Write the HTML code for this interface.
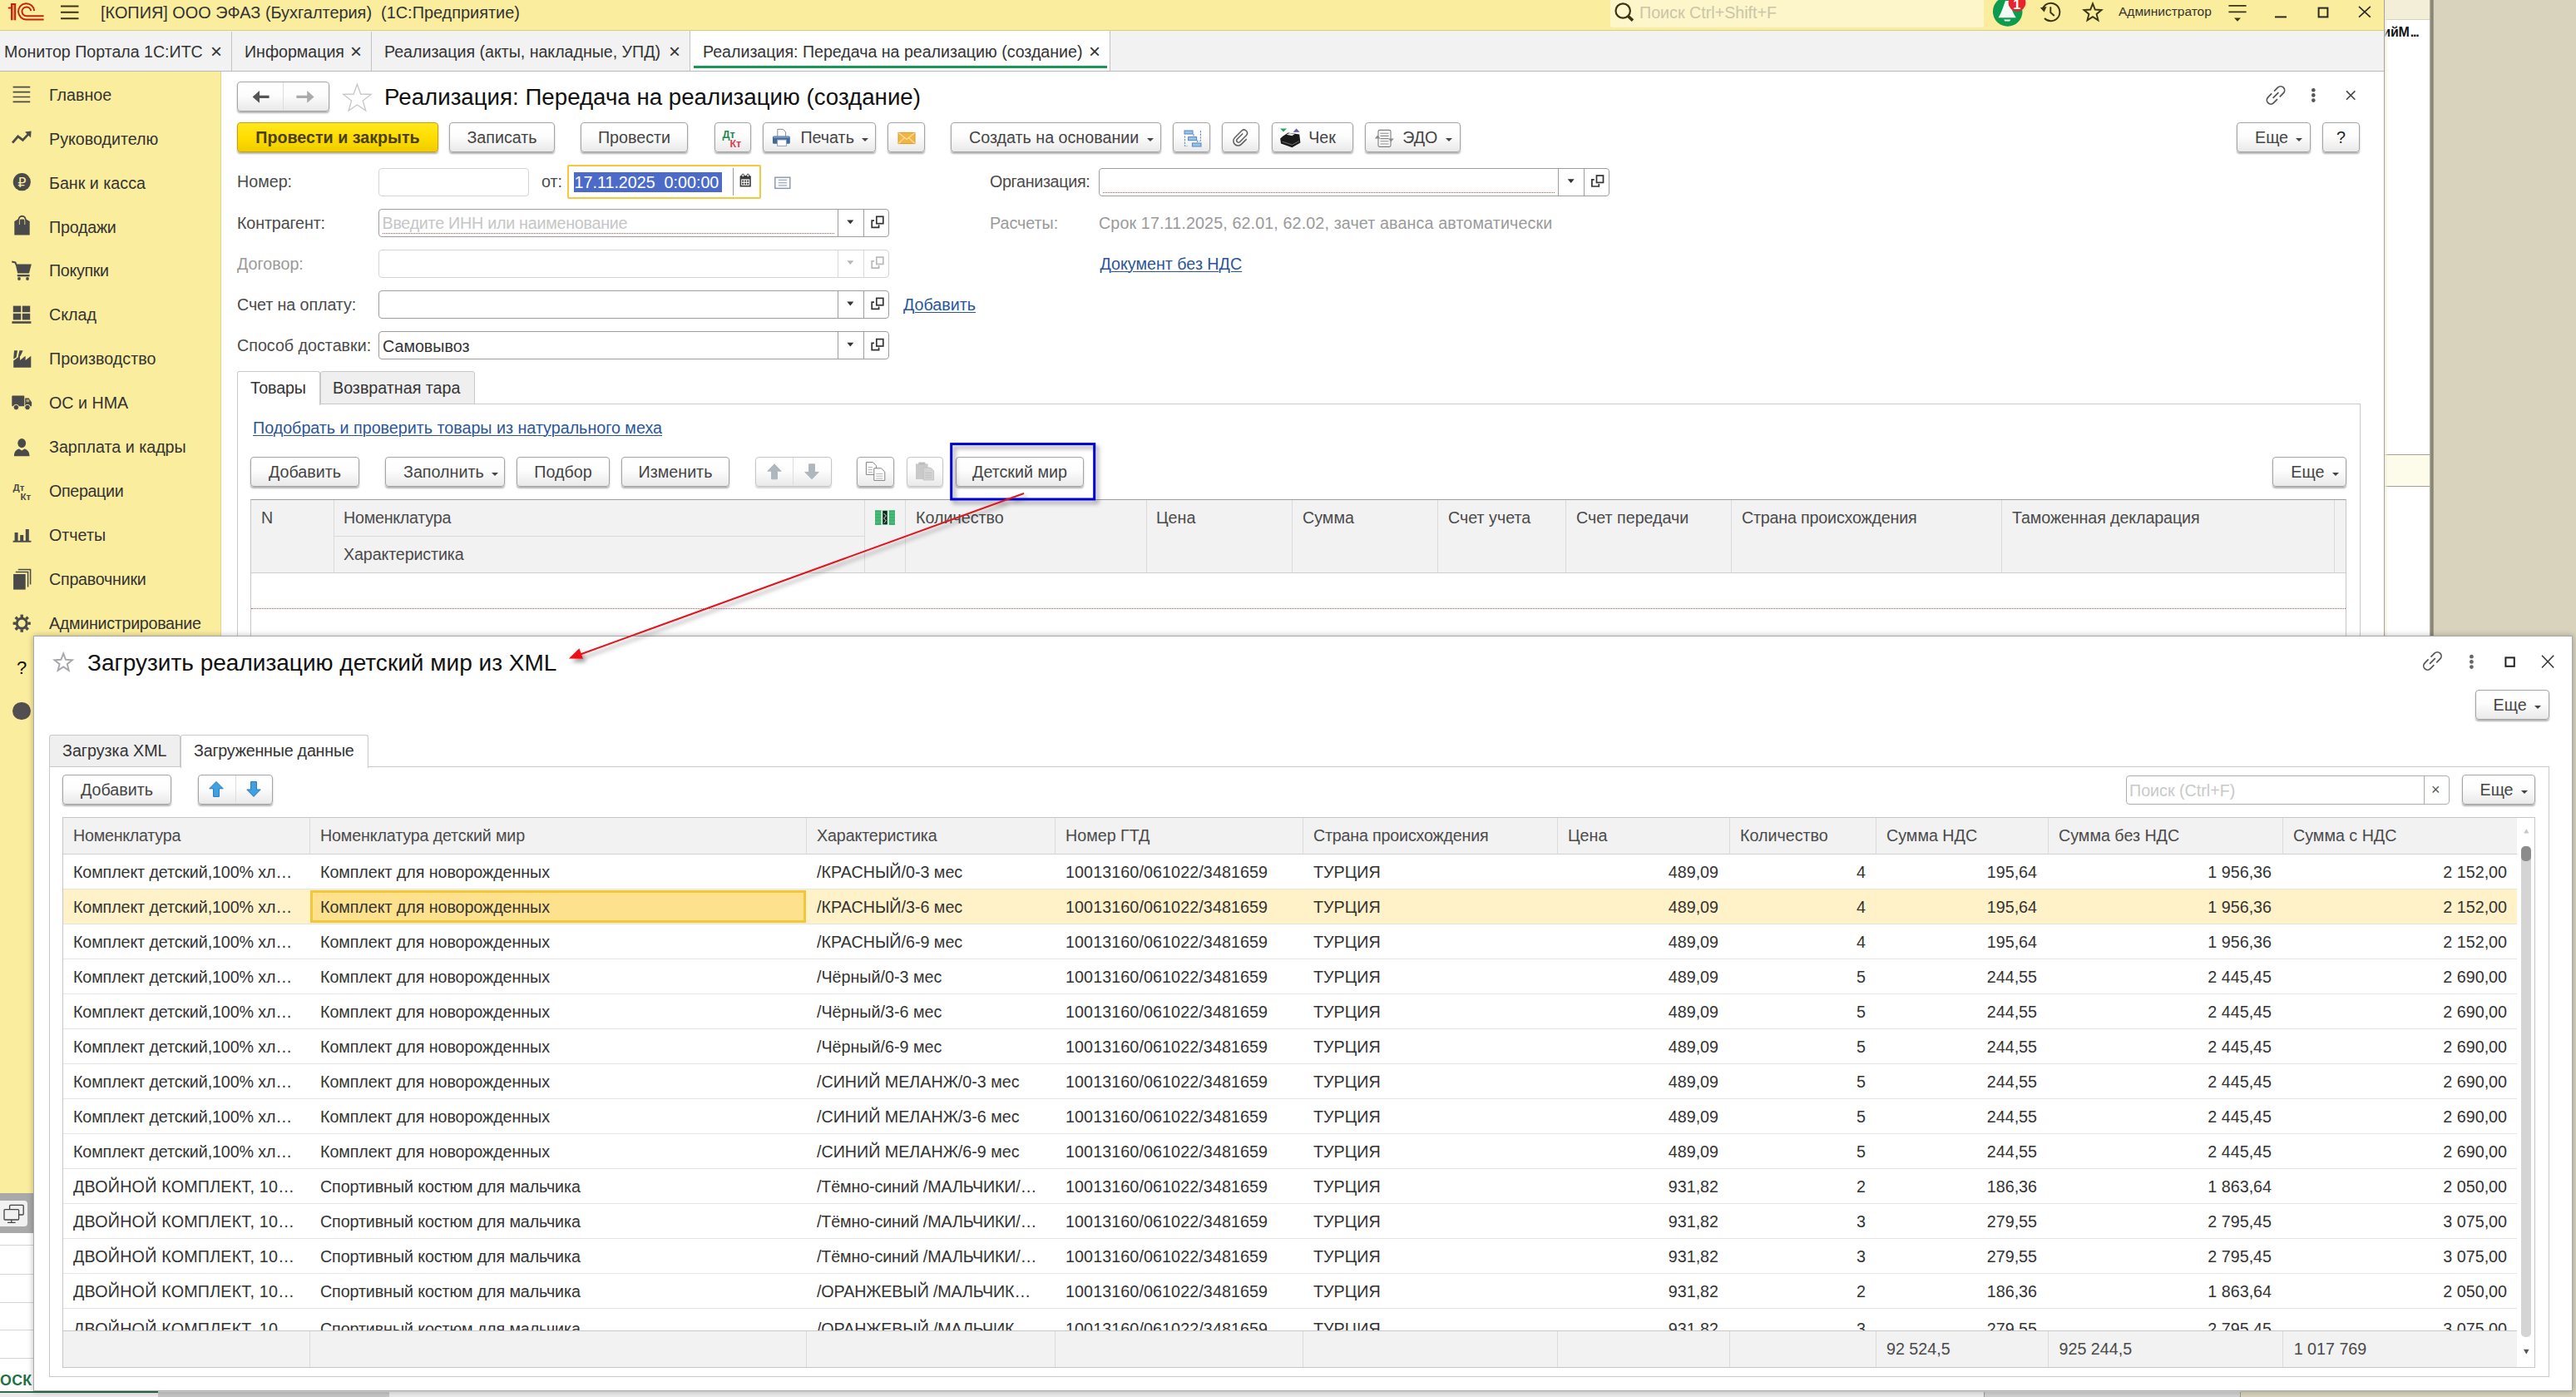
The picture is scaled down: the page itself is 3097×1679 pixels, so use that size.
<!DOCTYPE html><html lang="ru"><head><meta charset="utf-8"><title>1C</title><style>
*{box-sizing:border-box;margin:0;padding:0}
html,body{width:3097px;height:1679px;overflow:hidden}
body{position:relative;background:#D9D3BD;font-family:"Liberation Sans",Arial,sans-serif;font-size:19.7px;color:#3C3C3C;line-height:1}
.a{position:absolute}
.t{position:absolute;white-space:pre;line-height:24px;height:24px}
.btn{position:absolute;border:1px solid #A4A4A4;border-radius:4px;background:linear-gradient(#FFFFFF 0%,#FDFDFD 45%,#E9E9E9 100%);box-shadow:0 2px 2px rgba(0,0,0,.3);display:flex;align-items:center;justify-content:center;white-space:pre;color:#444;height:35px;padding-top:2px}
.btn.y{background:linear-gradient(#FFE820 0%,#FFDD00 50%,#F2CC00 100%);border-color:#C7A300;font-weight:bold;color:#4A3F10}
.car{display:inline-block;width:0;height:0;border-left:4.6px solid transparent;border-right:4.6px solid transparent;border-top:4.4px solid #444;margin-left:9.4px;position:relative;top:2px}
.btn.c{justify-content:flex-start;padding-left:21px}
.inp{position:absolute;border:1px solid #9E9E9E;border-radius:4px;background:#fff;height:34px}
.inp.dis{border-color:#D4D4D4}
.vd{position:absolute;top:0;bottom:0;width:1px;background:#9E9E9E}
.dis .vd{background:#D9D9D9}
.reddot{position:absolute;height:0;border-top:1px dotted #C4505C}
.lnk{color:#2A5699;text-decoration:underline;text-underline-offset:2px;text-decoration-thickness:1px}
.lbl{color:#4A4A4A}
.gray{color:#9A9A9A}
.hdr{position:absolute;background:#F2F2F2}
.vl{position:absolute;width:1px;background:#DADADA}
.hl{position:absolute;height:1px;background:#DADADA}
.r{position:absolute;white-space:pre;line-height:24px;height:24px;text-align:right}
</style></head><body>
<div class="a" style="left:2866px;top:0px;width:55px;height:1679px;background:#fff"></div>
<div class="a" style="left:2866px;top:0px;width:55px;height:24px;background:#F3EED7;border-bottom:1px solid #D9D4BB"></div>
<div class="t" style="left:2864.3px;top:26.799999999999997px;font-weight:bold;color:#111;font-size:16px;letter-spacing:-0.2px">ийМ<span style="letter-spacing:-1.2px;margin-left:1px">...</span></div>
<div class="a" style="left:2866px;top:546px;width:55px;height:39px;background:#FDFBEA;border-top:1px solid #A6A28E;border-bottom:1px solid #A6A28E"></div>
<div class="a" style="left:2867px;top:0px;width:4px;height:1679px;background:linear-gradient(90deg,rgba(238,236,220,.9),rgba(255,255,255,0))"></div>
<div class="a" style="left:2920.6px;top:0px;width:5.6px;height:1679px;background:linear-gradient(90deg,#B4B0A0 0%,#8A8676 45%,#7E7A6C 60%,#ABA796 100%)"></div>
<div class="a" style="left:0px;top:0px;width:2867px;height:1679px;background:#fff;border-right:1px solid #A8A490"></div>
<div class="a" style="left:0px;top:0px;width:2866px;height:37px;background:#FBED9E;border-bottom:1px solid #D9CD86"></div>
<div class="a" style="left:1936px;top:0px;width:449px;height:33px;background:#FDF6CA;border-radius:0 0 3px 3px"></div>
<div class="t" style="left:121px;top:3px;font-size:19.9px;color:#333">[КОПИЯ] ООО ЭФАЗ (Бухгалтерия)  (1С:Предприятие)</div>
<div class="t" style="left:1971px;top:3px;font-size:19.7px;color:#CAC5A8">Поиск Ctrl+Shift+F</div>
<div class="t" style="left:2547px;top:2px;font-size:15.5px;color:#333">Администратор</div>
<div class="a" style="left:0px;top:37px;width:2866px;height:49px;background:#F2F2F2;border-bottom:1px solid #B8B8B8"></div>
<div class="a" style="left:829.4px;top:37px;width:506px;height:48.4px;background:#fff;border-left:1px solid #C4C4C4;border-right:1px solid #C4C4C4"></div>
<div class="a" style="left:834px;top:78.6px;width:497px;height:3.2px;background:#169A53"></div>
<div class="a" style="left:278px;top:38px;width:1px;height:47px;background:#C4C4C4"></div>
<div class="a" style="left:446px;top:38px;width:1px;height:47px;background:#C4C4C4"></div>
<div class="t" style="left:5px;top:50px;color:#333;font-size:19.6px">Монитор Портала 1С:ИТС</div>
<div class="t" style="left:294px;top:50px;color:#333;font-size:19.6px">Информация</div>
<div class="t" style="left:462px;top:50px;color:#333;font-size:19.6px">Реализация (акты, накладные, УПД)</div>
<div class="t" style="left:845px;top:50px;color:#333;font-size:19.6px">Реализация: Передача на реализацию (создание)</div>
<div class="t" style="left:253px;top:49.6px;font-size:24px;color:#333">×</div>
<div class="t" style="left:421px;top:49.6px;font-size:24px;color:#333">×</div>
<div class="t" style="left:804px;top:49.6px;font-size:24px;color:#333">×</div>
<div class="t" style="left:1309px;top:49.6px;font-size:24px;color:#333">×</div>
<div class="a" style="left:0px;top:86px;width:266px;height:1349px;background:#FBED9E;border-right:1px solid #E3D58A"></div>
<div class="t" style="left:59px;top:101.8px;color:#333">Главное</div>
<div class="t" style="left:59px;top:154.7px;color:#333">Руководителю</div>
<div class="t" style="left:59px;top:207.6px;color:#333">Банк и касса</div>
<div class="t" style="left:59px;top:260.5px;color:#333;letter-spacing:-0.23px">Продажи</div>
<div class="t" style="left:59px;top:313.4px;color:#333;letter-spacing:-0.35px">Покупки</div>
<div class="t" style="left:59px;top:366.3px;color:#333">Склад</div>
<div class="t" style="left:59px;top:419.2px;color:#333">Производство</div>
<div class="t" style="left:59px;top:472.1px;color:#333">ОС и НМА</div>
<div class="t" style="left:59px;top:525.0px;color:#333">Зарплата и кадры</div>
<div class="t" style="left:59px;top:577.9px;color:#333;letter-spacing:-0.34px">Операции</div>
<div class="t" style="left:59px;top:630.8px;color:#333">Отчеты</div>
<div class="t" style="left:59px;top:683.6999999999999px;color:#333;letter-spacing:-0.25px">Справочники</div>
<div class="t" style="left:59px;top:736.5999999999999px;color:#333;letter-spacing:-0.3px">Администрирование</div>
<div class="t" style="left:20px;top:790.6px;color:#111;font-size:22px">?</div>
<div class="a" style="left:15px;top:843.8px;width:21.6px;height:21.6px;background:#524F51;border-radius:50%"></div>
<div class="btn" style="left:285px;top:98px;width:111px;height:36px;"></div>
<div class="a" style="left:340px;top:99px;width:1px;height:33px;background:#DDD"></div>
<div class="t" style="left:462px;top:104.6px;font-size:27.7px;color:#111;line-height:34px;height:34px;margin-top:-5px">Реализация: Передача на реализацию (создание)</div>
<div class="btn y" style="left:285px;top:147.3px;width:242px;height:36px;">Провести и закрыть</div>
<div class="btn" style="left:540px;top:147.3px;width:127px;height:36px;">Записать</div>
<div class="btn" style="left:698px;top:147.3px;width:129px;height:36px;">Провести</div>
<div class="btn" style="left:859px;top:147.3px;width:44px;height:36px;"></div>
<div class="btn c" style="left:917.4px;top:147.3px;width:135.60000000000002px;height:36px;padding-left:44px">Печать<span class="car"></span></div>
<div class="btn" style="left:1067px;top:147.3px;width:45px;height:36px;"></div>
<div class="btn c" style="left:1143px;top:147.3px;width:253.20000000000005px;height:36px;">Создать на основании<span class="car"></span></div>
<div class="btn" style="left:1410px;top:147.3px;width:45px;height:36px;"></div>
<div class="btn" style="left:1469px;top:147.3px;width:45px;height:36px;"></div>
<div class="btn c" style="left:1528.6px;top:147.3px;width:98.90000000000009px;height:36px;padding-left:43.6px">Чек</div>
<div class="btn c" style="left:1641.4px;top:147.3px;width:114.79999999999995px;height:36px;padding-left:43.8px">ЭДО<span class="car"></span></div>
<div class="btn c" style="left:2689px;top:147.3px;width:89px;height:36px;">Еще<span class="car"></span></div>
<div class="btn" style="left:2792px;top:147.3px;width:45px;height:36px;color:#222">?</div>
<div class="t lbl" style="left:285px;top:206.4px;">Номер:</div>
<div class="inp dis" style="left:455px;top:201.6px;width:181px"></div>
<div class="t lbl" style="left:651px;top:206.4px;">от:</div>
<div class="inp" style="left:682px;top:198px;width:232.6px;height:41px;border:2px solid #F7C83B;border-radius:2px"><div class="vd" style="left:196.5px;top:2px;bottom:2px;background:#9A9A9A"></div></div>
<div class="a" style="left:690px;top:207px;width:178px;height:24px;background:#4C6BC8"></div>
<div class="t" style="left:690.6px;top:206.9px;color:#fff">17.11.2025  0:00:00</div>
<div class="t lbl" style="left:1190px;top:206.4px;;letter-spacing:-0.32px">Организация:</div>
<div class="inp" style="left:1321px;top:201.6px;width:614px"><div class="vd" style="left:551px"></div><div class="vd" style="left:582px"></div><div class="reddot" style="left:4px;width:543px;top:28px"></div></div>
<div class="t lbl" style="left:285px;top:255.7px;;letter-spacing:-0.12px">Контрагент:</div>
<div class="inp" style="left:455px;top:250.6px;width:614px"><div class="vd" style="left:551px"></div><div class="vd" style="left:582px"></div><div class="reddot" style="left:4px;width:543px;top:28px"></div></div>
<div class="t" style="left:459.5px;top:256.2px;color:#C6C6C6;letter-spacing:-0.25px">Введите ИНН или наименование</div>
<div class="t gray" style="left:1190px;top:255.7px;">Расчеты:</div>
<div class="t gray" style="left:1321px;top:255.7px;letter-spacing:0.13px">Срок 17.11.2025, 62.01, 62.02, зачет аванса автоматически</div>
<div class="t gray" style="left:285px;top:304.5px;">Договор:</div>
<div class="inp dis" style="left:455px;top:299.6px;width:614px"><div class="vd" style="left:551px"></div><div class="vd" style="left:582px"></div></div>
<div class="t lnk" style="left:1322.5px;top:304.5px;">Документ без НДС</div>
<div class="t lbl" style="left:285px;top:353.8px;;letter-spacing:-0.09px">Счет на оплату:</div>
<div class="inp" style="left:455px;top:348.6px;width:614px"><div class="vd" style="left:551px"></div><div class="vd" style="left:582px"></div></div>
<div class="t lnk" style="left:1086px;top:353.8px;">Добавить</div>
<div class="t lbl" style="left:285px;top:403px;">Способ доставки:</div>
<div class="inp" style="left:455px;top:397.6px;width:614px"><div class="vd" style="left:551px"></div><div class="vd" style="left:582px"></div></div>
<div class="t" style="left:460px;top:403.5px;color:#333">Самовывоз</div>
<div class="a" style="left:285px;top:485px;width:2553px;height:300px;border:1px solid #C9C9C9;border-bottom:none;background:#fff"></div>
<div class="a" style="left:385px;top:446px;width:186px;height:40px;background:#EFEFEF;border:1px solid #C9C9C9;border-radius:3px 3px 0 0"></div>
<div class="a" style="left:285px;top:446px;width:100px;height:41px;background:#fff;border:1px solid #C9C9C9;border-bottom:none;border-radius:3px 3px 0 0"></div>
<div class="t" style="left:301px;top:454px;color:#333;letter-spacing:-0.16px">Товары</div>
<div class="t" style="left:400px;top:454px;color:#333">Возвратная тара</div>
<div class="t lnk" style="left:304px;top:501.6px;">Подобрать и проверить товары из натурального меха</div>
<div class="btn" style="left:301px;top:548.5px;width:131px;height:36px;">Добавить</div>
<div class="btn c" style="left:463px;top:548.5px;width:143.5px;height:36px;">Заполнить<span class="car"></span></div>
<div class="btn" style="left:621px;top:548.5px;width:112px;height:36px;">Подбор</div>
<div class="btn" style="left:747px;top:548.5px;width:130px;height:36px;">Изменить</div>
<div class="btn" style="left:908.4px;top:548.5px;width:91.20000000000005px;height:36px;border-color:#C6C6C6;box-shadow:0 2px 1.5px rgba(0,0,0,.16)"></div>
<div class="a" style="left:953px;top:549.5px;width:1px;height:33px;background:#DDD"></div>
<div class="btn" style="left:1030px;top:548.5px;width:45px;height:36px;"></div>
<div class="btn" style="left:1089.6px;top:548.5px;width:44.200000000000045px;height:36px;border-color:#C6C6C6;box-shadow:0 2px 1.5px rgba(0,0,0,.16)"></div>
<div class="btn" style="left:1149px;top:548.5px;width:154px;height:36px;">Детский мир</div>
<div class="btn c" style="left:2732.3px;top:548.5px;width:88.69999999999982px;height:36px;">Еще<span class="car"></span></div>
<div class="a" style="left:301px;top:600px;width:2520px;height:185px;border:1px solid #C6C6C6;border-top-color:#9E9E9E;border-bottom:none;background:#fff"></div>
<div class="a" style="left:302px;top:601px;width:2518px;height:88px;background:#F2F2F2;border-bottom:1px solid #CFCFCF"></div>
<div class="a" style="left:401px;top:601px;width:1px;height:88px;background:#DADADA"></div>
<div class="a" style="left:1039px;top:601px;width:1px;height:88px;background:#DADADA"></div>
<div class="a" style="left:1088px;top:601px;width:1px;height:88px;background:#DADADA"></div>
<div class="a" style="left:1378px;top:601px;width:1px;height:88px;background:#DADADA"></div>
<div class="a" style="left:1553px;top:601px;width:1px;height:88px;background:#DADADA"></div>
<div class="a" style="left:1728px;top:601px;width:1px;height:88px;background:#DADADA"></div>
<div class="a" style="left:1882px;top:601px;width:1px;height:88px;background:#DADADA"></div>
<div class="a" style="left:2081px;top:601px;width:1px;height:88px;background:#DADADA"></div>
<div class="a" style="left:2406px;top:601px;width:1px;height:88px;background:#DADADA"></div>
<div class="a" style="left:2806px;top:601px;width:1px;height:88px;background:#DADADA"></div>
<div class="a" style="left:401px;top:644px;width:638px;height:1px;background:#DADADA"></div>
<div class="t" style="left:314px;top:610px;color:#4A4A4A">N</div>
<div class="t" style="left:413px;top:610px;color:#4A4A4A;letter-spacing:-0.25px">Номенклатура</div>
<div class="t" style="left:1101px;top:610px;color:#4A4A4A">Количество</div>
<div class="t" style="left:1390px;top:610px;color:#4A4A4A">Цена</div>
<div class="t" style="left:1566px;top:610px;color:#4A4A4A">Сумма</div>
<div class="t" style="left:1741px;top:610px;color:#4A4A4A">Счет учета</div>
<div class="t" style="left:1895px;top:610px;color:#4A4A4A">Счет передачи</div>
<div class="t" style="left:2094px;top:610px;color:#4A4A4A;letter-spacing:-0.19px">Страна происхождения</div>
<div class="t" style="left:2419px;top:610px;color:#4A4A4A;letter-spacing:-0.11px">Таможенная декларация</div>
<div class="t" style="left:413px;top:653.8px;color:#4A4A4A;letter-spacing:-0.13px">Характеристика</div>
<div class="reddot" style="left:302px;width:2518px;top:731px"></div>
<svg class="a" style="left:0;top:0" width="3097" height="1679" viewBox="0 0 3097 1679"><rect x="13.6" y="5" width="5" height="19.2" fill="#C2240D" opacity=".45"/><g fill="none" stroke="#C2240D" stroke-width="2"><path d="M9.8 9.6 L14 9.6 M14 5 L14 24.2 M18.2 5 L18.2 24.2 M13 5 L19.2 5" /><path d="M41.2 13 A9.6 9.6 0 1 0 32 23.4 L52.6 23.4"/><path d="M37.2 13 A5.4 5.4 0 1 0 32 19.2 L52.6 19.2"/></g><g stroke="#3A3415" stroke-width="2"><path d="M73 7.4H94.5M73 14.8H94.5M73 22.3H94.5"/></g><g fill="none" stroke="#3A3415" stroke-width="2.2"><circle cx="1951.2" cy="13" r="8.7"/><path d="M1957.5 19.5L1963 24.6" stroke-width="3.6"/></g><circle cx="2413.7" cy="13.9" r="17.8" fill="#0D9B4D"/><path d="M2411 1 C2409 6 2407 14 2402.5 21.2 L2423.8 21.2 C2419 14 2417 6 2415 1 Z" fill="#F2FAF5"/><path d="M2409 23.6 L2417.5 23.6 L2416 25.6 L2410.5 25.6 Z" fill="#F2FAF5"/><circle cx="2425" cy="3.4" r="10.4" fill="#E8232A"/><text x="2420.2" y="11.4" fill="#fff" font-family="Liberation Sans, sans-serif" font-weight="bold" font-size="16.5px">1</text><g fill="none" stroke="#3A3415" stroke-width="1.9"><path d="M2456.2 9.5 A10.7 10.7 0 1 1 2458 22"/><path d="M2465.3 8.2 V15 L2469.8 19"/></g><path d="M2452.8 9.2 L2460.6 8 L2457.6 14.6 Z" fill="#3A3415"/><polygon points="2516.0,4.4 2518.8,11.5 2526.5,12.0 2520.6,16.9 2522.5,24.3 2516.0,20.2 2509.5,24.3 2511.4,16.9 2505.5,12.0 2513.2,11.5" fill="none" stroke="#3A3415" stroke-width="1.9" stroke-linejoin="miter"/><g stroke="#3A3415" stroke-width="1.9"><path d="M2679.4 6.9H2700.6M2679.4 14.4H2700.6"/></g><path d="M2686 21.6 L2694 21.6 L2690 25.8 Z" fill="#3A3415"/><g fill="none" stroke="#2A2A2A" stroke-width="2"><path d="M2735 20.4H2749"/><rect x="2787.6" y="9.6" width="10.8" height="10.8"/></g><g stroke="#2A2A2A" stroke-width="1.6"><path d="M2836 7.8L2849.8 20.6M2849.8 7.8L2836 20.6"/></g><g stroke="#4A4A4A" stroke-width="1.7"><path d="M15.6 104.6H36.2M15.6 110.6H36.2M15.6 116.5H36.2M15.6 122.4H36.2"/></g><path d="M15 171.6 L21.6 164 L27.4 168.4 L34 161.4" fill="none" stroke="#4A4A4A" stroke-width="2.8"/><path d="M30 158.4 L37.6 157.6 L37 165.6 Z" fill="#4A4A4A"/><circle cx="26.3" cy="218.7" r="10.6" fill="#4A4A4A"/><text x="21.2" y="224.6" fill="#FBED9E" font-family="DejaVu Sans, sans-serif" font-size="16px">₽</text><path d="M17.3 266 L21.5 263.6 L31.5 263.6 L35.7 266 L35.7 282.5 L17.3 282.5 Z" fill="#4A4A4A"/><path d="M22.6 270 V264 A4 4.2 0 0 1 30.6 264 V270" fill="none" stroke="#4A4A4A" stroke-width="2"/><path d="M23.4 270 V265.2 A3.2 3.4 0 0 1 29.8 265.2 V270" fill="none" stroke="#FBED9E" stroke-width="1" opacity=".8"/><path d="M14.2 314.6 L18.4 315.4 L19.6 318.2" fill="none" stroke="#4A4A4A" stroke-width="2"/><path d="M18.6 317.6 L37.8 317.6 L35 328.4 L21.2 328.4 Z" fill="#4A4A4A"/><path d="M20.8 331.2 H35.6" stroke="#4A4A4A" stroke-width="2.4"/><circle cx="23" cy="335" r="1.9" fill="#4A4A4A"/><circle cx="33" cy="335" r="1.9" fill="#4A4A4A"/><g fill="#4A4A4A"><rect x="15.8" y="367.6" width="9.4" height="7.6"/><rect x="26.8" y="367.6" width="9.4" height="7.6"/><rect x="15.8" y="376.8" width="9.4" height="7.6"/><rect x="26.8" y="376.8" width="9.4" height="7.6"/><rect x="14.4" y="386.2" width="23" height="2.6"/></g><g fill="#4A4A4A"><path d="M17 421.2 L21 421.2 L19.6 429.4 L16.2 431.6 Z"/><path d="M23.4 421.2 L27.6 421.2 L24.8 427.4 L21.6 429.4 Z"/><path d="M16.2 441.8 V433.4 L24 427.8 V433 L30.6 427.8 V433 L37.3 427.8 V441.8 Z"/></g><g fill="#4A4A4A"><rect x="14.3" y="475.5" width="15" height="12.8" rx="1"/><path d="M30.2 478.6 H34.6 L38.1 483.4 V488.3 H30.2 Z"/><circle cx="19.4" cy="489.6" r="3.3" stroke="#FBED9E" stroke-width="1"/><circle cx="33" cy="489.6" r="3.3" stroke="#FBED9E" stroke-width="1"/></g><rect x="31.6" y="480" width="3.6" height="3.2" fill="#FBED9E" opacity=".55"/><g fill="#4A4A4A"><ellipse cx="26.2" cy="532.6" rx="4.9" ry="5.6"/><path d="M16.9 548.3 C16.9 542.4 20 540.4 23 539.6 L26.2 541.4 L29.4 539.6 C32.4 540.4 35.5 542.4 35.5 548.3 Z"/></g><g fill="#4A4A4A" font-family="Liberation Sans, sans-serif" font-weight="bold" font-size="11.5px"><text x="15.6" y="589.6">Дт</text><text x="24.6" y="601.4">Кт</text></g><g fill="#4A4A4A"><rect x="15.6" y="649.8" width="21.8" height="1.9"/><rect x="17.6" y="640" width="4" height="10"/><rect x="24.2" y="643" width="4" height="7"/><rect x="30.8" y="636" width="4" height="14"/></g><rect x="16.1" y="690" width="14.6" height="18.6" fill="#4A4A4A"/><path d="M18.8 687.4 H33.6 V705.6 M21.8 684.4 H36.6 V702.6" fill="none" stroke="#4A4A4A" stroke-width="1.5"/><circle cx="26.2" cy="749.2" r="6" fill="none" stroke="#4A4A4A" stroke-width="3"/><path d="M33.4 749.2L36.8 749.2" stroke="#4A4A4A" stroke-width="3.4"/><path d="M31.3 754.3L33.7 756.7" stroke="#4A4A4A" stroke-width="3.4"/><path d="M26.2 756.4L26.2 759.8" stroke="#4A4A4A" stroke-width="3.4"/><path d="M21.1 754.3L18.7 756.7" stroke="#4A4A4A" stroke-width="3.4"/><path d="M19.0 749.2L15.6 749.2" stroke="#4A4A4A" stroke-width="3.4"/><path d="M21.1 744.1L18.7 741.7" stroke="#4A4A4A" stroke-width="3.4"/><path d="M26.2 742.0L26.2 738.6" stroke="#4A4A4A" stroke-width="3.4"/><path d="M31.3 744.1L33.7 741.7" stroke="#4A4A4A" stroke-width="3.4"/><path d="M303.6 116.4 L312 109 V114.7 H323.6 V118.1 H312 V123.8 Z" fill="#555"/><path d="M377.6 116.4 L369.2 109 V114.7 H356.4 V118.1 H369.2 V123.8 Z" fill="#ABABAB"/><polygon points="429.4,101.2 433.6,113.0 446.1,113.4 436.2,121.0 439.7,133.0 429.4,126.0 419.1,133.0 422.6,121.0 412.7,113.4 425.2,113.0" fill="none" stroke="#C6C6C6" stroke-width="1.3" stroke-linejoin="miter"/><g transform="translate(2736,114.4) rotate(-45) scale(.92)" fill="none" stroke="#555" stroke-width="1.9"><path d="M-2.2 -5.2 H-9 A5.2 5.2 0 0 0 -9 5.2 H-2.2"/><path d="M2.2 -5.2 H9 A5.2 5.2 0 0 1 9 5.2 H2.2"/><path d="M-5.2 0 H5.2"/></g><g fill="#555"><circle cx="2781.3" cy="108.2" r="2.3"/><circle cx="2781.3" cy="114.4" r="2.3"/><circle cx="2781.3" cy="120.6" r="2.3"/></g><g stroke="#444" stroke-width="1.6"><path d="M2821 109.4L2831.4 119.8M2831.4 109.4L2821 119.8"/></g><g font-family="Liberation Sans, sans-serif" font-weight="bold" font-size="12.6px"><text x="868.6" y="165.6" fill="#1E8A50">Дт</text><text x="877.4" y="176.6" fill="#D9434E">Кт</text></g><path d="M934.8 163.6 V155.4 H941.4 L944.6 158.6 V163.6" fill="#fff" stroke="#8A8A8A" stroke-width="1"/><rect x="929" y="163.4" width="20.8" height="9.4" rx="1.6" fill="#40699C"/><rect x="930" y="164.2" width="18.8" height="1.6" fill="#7C9DC6"/><rect x="934.6" y="168" width="10.8" height="7.4" fill="#fff" stroke="#8A9AB0" stroke-width=".9"/><rect x="1080" y="159.4" width="20" height="13.2" fill="#F2B544" stroke="#D99A28" stroke-width="1"/><path d="M1080.4 159.8 L1090 167.4 L1099.6 159.8 M1080.4 172.2 L1087.4 165.6 M1099.6 172.2 L1092.6 165.6" fill="none" stroke="#FBE2A6" stroke-width="1.2"/><g fill="#9CC0E6" stroke="#5288C4" stroke-width="1"><rect x="1424" y="157" width="10" height="4"/><rect x="1428.6" y="164.6" width="10" height="4"/><rect x="1433.4" y="172" width="10.6" height="4"/></g><path d="M1424.4 163.4 V175.6 H1427.4 M1443.4 157 V169.6 H1441 M1435 161 V164.6 M1439.6 168.6 V172" fill="none" stroke="#5288C4" stroke-width="1" stroke-dasharray="2.4 1.2"/><g transform="translate(1491.6,165.2) scale(.9) translate(-1492.7,-165.9)"><path d="M1495.6 160.6 L1488 168.2 A2.5 2.5 0 0 0 1491.6 171.8 L1500.4 163 A4.4 4.4 0 0 0 1494.2 156.8 L1484.8 166.2 A6.2 6.2 0 0 0 1493.6 175 L1500.6 168" fill="none" stroke="#606060" stroke-width="1.7"/></g><path d="M1539 154.4 H1547 L1543 158.6 Z" fill="#2E9E5E"/><path d="M1554.6 158.8 H1562.6 L1558.6 154.4 Z" fill="#5A55B8"/><path d="M1542.6 163.4 L1548.6 159.4 L1562.2 161.6 L1563.4 171.6 L1553.4 177.2 L1540 172.6 L1539.2 166.4 Z" fill="#1A1A1A"/><path d="M1546.6 161.8 L1550.2 160 L1556.6 161 L1553.4 163.2 Z" fill="#E8E8E8"/><path d="M1541.6 170.2 L1553.4 174 L1562 169.6" fill="none" stroke="#777" stroke-width=".9"/><rect x="1657" y="156.4" width="15" height="20" rx="1.6" fill="#FAFAFA" stroke="#7E7E7E" stroke-width="1.1"/><g stroke="#8A8A8A" stroke-width="1.1"><path d="M1659.4 160.2H1669.6M1659.4 163.4H1669.6M1659.4 166.6H1669.6M1659.4 169.8H1669.6M1659.4 173H1669.6"/></g><path d="M1652.8 166.6 L1656.2 162.6 L1659.6 166.6 Z" fill="#8A8A8A"/><path d="M1669 166.4 L1672.4 170.6 L1675.8 166.4 Z" fill="#8A8A8A"/><g fill="#3A3A3A"><path d="M889.6 212.4 Q889.6 211 891 211 H901.4 Q902.8 211 902.8 212.4 V224.4 H889.6 Z"/></g><rect x="891.2" y="215.4" width="10" height="7.4" fill="#fff"/><g fill="#3A3A3A"><rect x="892.2" y="216.6" width="2" height="2"/><rect x="895.2" y="216.6" width="2" height="2"/><rect x="898.2" y="216.6" width="2" height="2"/><rect x="892.2" y="219.8" width="2" height="2"/><rect x="895.2" y="219.8" width="2" height="2"/><rect x="898.2" y="219.8" width="2" height="2"/></g><g fill="#fff" stroke="#3A3A3A" stroke-width="1"><rect x="892" y="209.2" width="2.4" height="3.6" rx="1"/><rect x="898" y="209.2" width="2.4" height="3.6" rx="1"/></g><rect x="931.8" y="213.2" width="18" height="13.2" fill="#F7F9FB" stroke="#8A96A8" stroke-width="1.4"/><g stroke="#A4AEBC" stroke-width="1.3"><path d="M935.8 216.4H946M935.8 219.6H946M935.8 222.8H946"/></g><path d="M1884.7 215.20000000000002 L1892.7 215.20000000000002 L1888.7 220.0 Z" fill="#333"/><g fill="none" stroke="#333" stroke-width="1.7"><rect x="1919.5" y="211.0" width="8" height="8.4"/><path d="M1916.7 215.8 H1913.9 V224.0 H1922.3 V221.0"/></g><path d="M1018.3 264.5 L1026.3 264.5 L1022.3 269.3 Z" fill="#333"/><g fill="none" stroke="#333" stroke-width="1.7"><rect x="1053.8" y="260.3" width="8" height="8.4"/><path d="M1051 265.09999999999997 H1048.2 V273.3 H1056.6 V270.3"/></g><path d="M1018.3 313.3 L1026.3 313.3 L1022.3 318.1 Z" fill="#B8B8B8"/><g fill="none" stroke="#B8B8B8" stroke-width="1.7"><rect x="1053.8" y="309.1" width="8" height="8.4"/><path d="M1051 313.9 H1048.2 V322.1 H1056.6 V319.1"/></g><path d="M1018.3 362.6 L1026.3 362.6 L1022.3 367.40000000000003 Z" fill="#333"/><g fill="none" stroke="#333" stroke-width="1.7"><rect x="1053.8" y="358.40000000000003" width="8" height="8.4"/><path d="M1051 363.2 H1048.2 V371.40000000000003 H1056.6 V368.40000000000003"/></g><path d="M1018.3 411.8 L1026.3 411.8 L1022.3 416.6 Z" fill="#333"/><g fill="none" stroke="#333" stroke-width="1.7"><rect x="1053.8" y="407.6" width="8" height="8.4"/><path d="M1051 412.4 H1048.2 V420.6 H1056.6 V417.6"/></g><path d="M931 557.8 L939.2 566.1999999999999 H934.4 V575.8 H927.6 V566.1999999999999 H922.8 Z" fill="#AEB6BE" stroke="#AEB6BE" stroke-width="1" stroke-linejoin="round"/><path d="M976 575.8 L984.2 567.4 H979.4 V557.8 H972.6 V567.4 H967.8 Z" fill="#AEB6BE" stroke="#AEB6BE" stroke-width="1" stroke-linejoin="round"/><g fill="#fff" stroke="#808080" stroke-width="1"><path d="M1041.4 555.6 H1049.4 L1053.4 559.6 V570.4 H1041.4 Z"/><path d="M1050.8 562.8 H1059.4 L1063.8 567.2 V577.4 H1050.8 Z"/></g><g stroke="#A8A8A8" stroke-width=".9"><path d="M1043.6 561.6H1049M1043.6 564.6H1049M1043.6 567.6H1049M1053.2 569.4H1061.4M1053.2 572.2H1061.4M1053.2 575H1061.4"/></g><rect x="1101" y="557.4" width="14.6" height="18.6" fill="#C9C9C9"/><rect x="1104.4" y="555.6" width="8" height="3" fill="#BDBDBD"/><path d="M1110.2 562 H1118.8 L1122.6 565.8 V577 H1110.2 Z" fill="#D4D4D4" stroke="#BEBEBE" stroke-width=".8"/><g stroke="#BCBCBC" stroke-width=".9"><path d="M1112.4 568.4H1120.4M1112.4 571.2H1120.4M1112.4 574H1120.4"/></g><rect x="1052" y="613.2" width="24" height="17.8" fill="#3FB070"/><rect x="1059.4" y="613.2" width="9.4" height="17.8" fill="#DFF5E8"/><rect x="1061.2" y="613.8" width="5.6" height="16.6" fill="#0E2A1A"/><path d="M1062.6 617 L1065.4 620 L1062.6 623 L1065.4 626 L1062.6 628.6" fill="none" stroke="#DDD" stroke-width="1"/><g stroke="#5CC48A" stroke-width=".8"><path d="M1052 616.6H1059M1052 620.2H1059M1052 623.8H1059M1052 627.4H1059M1069 616.6H1076M1069 620.2H1076M1069 623.8H1076M1069 627.4H1076"/></g></svg>
<div class="a" style="left:0px;top:1434px;width:80px;height:48px;background:#A9A9A9"></div>
<div class="a" style="left:-4px;top:1443px;width:37px;height:31px;background:#F1F1F1;border-radius:4px"></div>
<svg class="a" style="left:0;top:1440px" width="40" height="40" viewBox="0 1440 40 40"><g fill="#F1F1F1" stroke="#444" stroke-width="1.3"><rect x="11.6" y="1448.4" width="16.6" height="11.6" rx="1"/><rect x="5" y="1453.6" width="17.6" height="12.4" rx="1"/></g><path d="M13.8 1466 V1469 M9 1469.4 H18.6" stroke="#444" stroke-width="1.3" fill="none"/></svg>
<div class="a" style="left:0px;top:1482px;width:80px;height:197px;background:#fff"></div>
<div class="a" style="left:0px;top:1496px;width:80px;height:1px;background:#D4D4D4"></div>
<div class="a" style="left:0px;top:1531px;width:80px;height:1px;background:#D4D4D4"></div>
<div class="a" style="left:0px;top:1565px;width:80px;height:1px;background:#D4D4D4"></div>
<div class="a" style="left:0px;top:1598px;width:80px;height:1px;background:#D4D4D4"></div>
<div class="a" style="left:0px;top:1632px;width:80px;height:1px;background:#D4D4D4"></div>
<div class="t" style="left:0px;top:1646.6px;color:#1E7145;font-weight:bold;font-size:17.8px;letter-spacing:0.3px">ОСК</div>
<div class="a" style="left:0px;top:1672px;width:3097px;height:7px;background:#E9E9E9"></div>
<div class="a" style="left:0px;top:1672px;width:190px;height:2px;background:#2F6B4C"></div>
<div class="a" style="left:190px;top:1673px;width:278px;height:6px;background:#C4C4C4"></div>
<div class="a" style="left:2385px;top:1673px;width:309px;height:6px;background:#CFCFCF;border-left:1px solid #9A9A9A;border-right:1px solid #9A9A9A"></div>
<div class="a" style="left:2694px;top:1672px;width:403px;height:7px;background:#D5D1BB"></div>
<div class="a" style="left:40px;top:764px;width:3053px;height:908px;background:#fff;border:1px solid #A8A8A8;box-shadow:0 0 7px rgba(0,0,0,.28)"></div>
<div class="t" style="left:105px;top:785.4px;font-size:28.03px;color:#111;line-height:34px;height:34px;margin-top:-5px">Загрузить реализацию детский мир из XML</div>
<div class="btn c" style="left:2975.6px;top:828.5px;width:89.0px;height:36px;">Еще<span class="car"></span></div>
<div class="a" style="left:59px;top:921px;width:3006px;height:734px;border:1px solid #C9C9C9;background:#fff"></div>
<div class="a" style="left:59px;top:883px;width:158px;height:39px;background:#EFEFEF;border:1px solid #C9C9C9;border-radius:3px 3px 0 0"></div>
<div class="a" style="left:217px;top:883px;width:225.6px;height:40px;background:#fff;border:1px solid #C9C9C9;border-bottom:none;border-radius:3px 3px 0 0"></div>
<div class="t" style="left:75px;top:890px;color:#333">Загрузка XML</div>
<div class="t" style="left:233px;top:890px;color:#333;letter-spacing:-0.22px">Загруженные данные</div>
<div class="btn" style="left:75px;top:931px;width:131px;height:36px;">Добавить</div>
<div class="btn" style="left:238px;top:931px;width:90px;height:36px;"></div>
<div class="a" style="left:283px;top:932px;width:1px;height:33px;background:#DDD"></div>
<div class="inp" style="left:2556px;top:932px;width:389px;height:35px;border-color:#ADADAD"><div class="vd" style="left:357px;background:#ADADAD"></div></div>
<div class="t" style="left:2560px;top:938px;color:#C9C9C9">Поиск (Ctrl+F)</div>
<div class="t" style="left:2923px;top:937px;color:#555;font-size:18px">×</div>
<div class="btn c" style="left:2959.5px;top:931px;width:88.5px;height:36px;">Еще<span class="car"></span></div>
<div class="a" style="left:75px;top:982px;width:2973px;height:662px;border:1px solid #C6C6C6;background:#fff"></div>
<div class="a" style="left:76px;top:983px;width:2950px;height:44px;background:#F2F2F2;border-bottom:1px solid #D0D0D0"></div>
<div class="t" style="left:88px;top:991.6px;color:#4A4A4A;letter-spacing:-0.25px">Номенклатура</div>
<div class="t" style="left:385px;top:991.6px;color:#4A4A4A;letter-spacing:-0.15px">Номенклатура детский мир</div>
<div class="t" style="left:982px;top:991.6px;color:#4A4A4A;letter-spacing:-0.13px">Характеристика</div>
<div class="t" style="left:1281px;top:991.6px;color:#4A4A4A">Номер ГТД</div>
<div class="t" style="left:1579px;top:991.6px;color:#4A4A4A;letter-spacing:-0.19px">Страна происхождения</div>
<div class="t" style="left:1885px;top:991.6px;color:#4A4A4A">Цена</div>
<div class="t" style="left:2092px;top:991.6px;color:#4A4A4A">Количество</div>
<div class="t" style="left:2268px;top:991.6px;color:#4A4A4A">Сумма НДС</div>
<div class="t" style="left:2475px;top:991.6px;color:#4A4A4A">Сумма без НДС</div>
<div class="t" style="left:2757px;top:991.6px;color:#4A4A4A">Сумма с НДС</div>
<div class="a" style="left:372px;top:983px;width:1px;height:44px;background:#DADADA"></div>
<div class="a" style="left:969px;top:983px;width:1px;height:44px;background:#DADADA"></div>
<div class="a" style="left:1268px;top:983px;width:1px;height:44px;background:#DADADA"></div>
<div class="a" style="left:1566px;top:983px;width:1px;height:44px;background:#DADADA"></div>
<div class="a" style="left:1872px;top:983px;width:1px;height:44px;background:#DADADA"></div>
<div class="a" style="left:2079px;top:983px;width:1px;height:44px;background:#DADADA"></div>
<div class="a" style="left:2255px;top:983px;width:1px;height:44px;background:#DADADA"></div>
<div class="a" style="left:2462px;top:983px;width:1px;height:44px;background:#DADADA"></div>
<div class="a" style="left:2744px;top:983px;width:1px;height:44px;background:#DADADA"></div>
<div class="a" style="left:76px;top:1027px;width:2950px;height:572px;overflow:hidden">
<div class="hl" style="left:0;top:40.6px;width:2950px;background:#E4E4E4"></div>
<div class="t" style="left:12px;top:8.9px;color:#333;letter-spacing:-0.11px">Комплект детский,100% хл…</div>
<div class="t" style="left:309px;top:8.9px;color:#333;letter-spacing:-0.06px">Комплект для новорожденных</div>
<div class="t" style="left:906px;top:8.9px;color:#333">/КРАСНЫЙ/0-3 мес</div>
<div class="t" style="left:1205px;top:8.9px;color:#333"><span style="letter-spacing:0.1px">10013160/061022/3481659</span></div>
<div class="t" style="left:1503px;top:8.9px;color:#333">ТУРЦИЯ</div>
<div class="r" style="right:960px;top:8.9px;color:#333">489,09</div>
<div class="r" style="right:783px;top:8.9px;color:#333">4</div>
<div class="r" style="right:577px;top:8.9px;color:#333">195,64</div>
<div class="r" style="right:295px;top:8.9px;color:#333">1 956,36</div>
<div class="r" style="right:12px;top:8.9px;color:#333">2 152,00</div>
<div class="a" style="left:0;top:41.7px;width:2950px;height:41.0px;background:#FFF1C8"></div>
<div class="a" style="left:297px;top:43.0px;width:596px;height:38.8px;background:#FEE18D;border:3px solid #F2C83A"></div>
<div class="hl" style="left:0;top:82.7px;width:2950px;background:#E4E4E4"></div>
<div class="t" style="left:12px;top:50.9px;color:#333;letter-spacing:-0.11px">Комплект детский,100% хл…</div>
<div class="t" style="left:309px;top:50.9px;color:#333;letter-spacing:-0.06px">Комплект для новорожденных</div>
<div class="t" style="left:906px;top:50.9px;color:#333">/КРАСНЫЙ/3-6 мес</div>
<div class="t" style="left:1205px;top:50.9px;color:#333"><span style="letter-spacing:0.1px">10013160/061022/3481659</span></div>
<div class="t" style="left:1503px;top:50.9px;color:#333">ТУРЦИЯ</div>
<div class="r" style="right:960px;top:50.9px;color:#333">489,09</div>
<div class="r" style="right:783px;top:50.9px;color:#333">4</div>
<div class="r" style="right:577px;top:50.9px;color:#333">195,64</div>
<div class="r" style="right:295px;top:50.9px;color:#333">1 956,36</div>
<div class="r" style="right:12px;top:50.9px;color:#333">2 152,00</div>
<div class="hl" style="left:0;top:124.7px;width:2950px;background:#E4E4E4"></div>
<div class="t" style="left:12px;top:93.0px;color:#333;letter-spacing:-0.11px">Комплект детский,100% хл…</div>
<div class="t" style="left:309px;top:93.0px;color:#333;letter-spacing:-0.06px">Комплект для новорожденных</div>
<div class="t" style="left:906px;top:93.0px;color:#333">/КРАСНЫЙ/6-9 мес</div>
<div class="t" style="left:1205px;top:93.0px;color:#333"><span style="letter-spacing:0.1px">10013160/061022/3481659</span></div>
<div class="t" style="left:1503px;top:93.0px;color:#333">ТУРЦИЯ</div>
<div class="r" style="right:960px;top:93.0px;color:#333">489,09</div>
<div class="r" style="right:783px;top:93.0px;color:#333">4</div>
<div class="r" style="right:577px;top:93.0px;color:#333">195,64</div>
<div class="r" style="right:295px;top:93.0px;color:#333">1 956,36</div>
<div class="r" style="right:12px;top:93.0px;color:#333">2 152,00</div>
<div class="hl" style="left:0;top:166.7px;width:2950px;background:#E4E4E4"></div>
<div class="t" style="left:12px;top:135.0px;color:#333;letter-spacing:-0.11px">Комплект детский,100% хл…</div>
<div class="t" style="left:309px;top:135.0px;color:#333;letter-spacing:-0.06px">Комплект для новорожденных</div>
<div class="t" style="left:906px;top:135.0px;color:#333">/Чёрный/0-3 мес</div>
<div class="t" style="left:1205px;top:135.0px;color:#333"><span style="letter-spacing:0.1px">10013160/061022/3481659</span></div>
<div class="t" style="left:1503px;top:135.0px;color:#333">ТУРЦИЯ</div>
<div class="r" style="right:960px;top:135.0px;color:#333">489,09</div>
<div class="r" style="right:783px;top:135.0px;color:#333">5</div>
<div class="r" style="right:577px;top:135.0px;color:#333">244,55</div>
<div class="r" style="right:295px;top:135.0px;color:#333">2 445,45</div>
<div class="r" style="right:12px;top:135.0px;color:#333">2 690,00</div>
<div class="hl" style="left:0;top:208.7px;width:2950px;background:#E4E4E4"></div>
<div class="t" style="left:12px;top:177.0px;color:#333;letter-spacing:-0.11px">Комплект детский,100% хл…</div>
<div class="t" style="left:309px;top:177.0px;color:#333;letter-spacing:-0.06px">Комплект для новорожденных</div>
<div class="t" style="left:906px;top:177.0px;color:#333">/Чёрный/3-6 мес</div>
<div class="t" style="left:1205px;top:177.0px;color:#333"><span style="letter-spacing:0.1px">10013160/061022/3481659</span></div>
<div class="t" style="left:1503px;top:177.0px;color:#333">ТУРЦИЯ</div>
<div class="r" style="right:960px;top:177.0px;color:#333">489,09</div>
<div class="r" style="right:783px;top:177.0px;color:#333">5</div>
<div class="r" style="right:577px;top:177.0px;color:#333">244,55</div>
<div class="r" style="right:295px;top:177.0px;color:#333">2 445,45</div>
<div class="r" style="right:12px;top:177.0px;color:#333">2 690,00</div>
<div class="hl" style="left:0;top:250.8px;width:2950px;background:#E4E4E4"></div>
<div class="t" style="left:12px;top:219.1px;color:#333;letter-spacing:-0.11px">Комплект детский,100% хл…</div>
<div class="t" style="left:309px;top:219.1px;color:#333;letter-spacing:-0.06px">Комплект для новорожденных</div>
<div class="t" style="left:906px;top:219.1px;color:#333">/Чёрный/6-9 мес</div>
<div class="t" style="left:1205px;top:219.1px;color:#333"><span style="letter-spacing:0.1px">10013160/061022/3481659</span></div>
<div class="t" style="left:1503px;top:219.1px;color:#333">ТУРЦИЯ</div>
<div class="r" style="right:960px;top:219.1px;color:#333">489,09</div>
<div class="r" style="right:783px;top:219.1px;color:#333">5</div>
<div class="r" style="right:577px;top:219.1px;color:#333">244,55</div>
<div class="r" style="right:295px;top:219.1px;color:#333">2 445,45</div>
<div class="r" style="right:12px;top:219.1px;color:#333">2 690,00</div>
<div class="hl" style="left:0;top:292.8px;width:2950px;background:#E4E4E4"></div>
<div class="t" style="left:12px;top:261.1px;color:#333;letter-spacing:-0.11px">Комплект детский,100% хл…</div>
<div class="t" style="left:309px;top:261.1px;color:#333;letter-spacing:-0.06px">Комплект для новорожденных</div>
<div class="t" style="left:906px;top:261.1px;color:#333">/СИНИЙ МЕЛАНЖ/0-3 мес</div>
<div class="t" style="left:1205px;top:261.1px;color:#333"><span style="letter-spacing:0.1px">10013160/061022/3481659</span></div>
<div class="t" style="left:1503px;top:261.1px;color:#333">ТУРЦИЯ</div>
<div class="r" style="right:960px;top:261.1px;color:#333">489,09</div>
<div class="r" style="right:783px;top:261.1px;color:#333">5</div>
<div class="r" style="right:577px;top:261.1px;color:#333">244,55</div>
<div class="r" style="right:295px;top:261.1px;color:#333">2 445,45</div>
<div class="r" style="right:12px;top:261.1px;color:#333">2 690,00</div>
<div class="hl" style="left:0;top:334.8px;width:2950px;background:#E4E4E4"></div>
<div class="t" style="left:12px;top:303.1px;color:#333;letter-spacing:-0.11px">Комплект детский,100% хл…</div>
<div class="t" style="left:309px;top:303.1px;color:#333;letter-spacing:-0.06px">Комплект для новорожденных</div>
<div class="t" style="left:906px;top:303.1px;color:#333">/СИНИЙ МЕЛАНЖ/3-6 мес</div>
<div class="t" style="left:1205px;top:303.1px;color:#333"><span style="letter-spacing:0.1px">10013160/061022/3481659</span></div>
<div class="t" style="left:1503px;top:303.1px;color:#333">ТУРЦИЯ</div>
<div class="r" style="right:960px;top:303.1px;color:#333">489,09</div>
<div class="r" style="right:783px;top:303.1px;color:#333">5</div>
<div class="r" style="right:577px;top:303.1px;color:#333">244,55</div>
<div class="r" style="right:295px;top:303.1px;color:#333">2 445,45</div>
<div class="r" style="right:12px;top:303.1px;color:#333">2 690,00</div>
<div class="hl" style="left:0;top:376.9px;width:2950px;background:#E4E4E4"></div>
<div class="t" style="left:12px;top:345.1px;color:#333;letter-spacing:-0.11px">Комплект детский,100% хл…</div>
<div class="t" style="left:309px;top:345.1px;color:#333;letter-spacing:-0.06px">Комплект для новорожденных</div>
<div class="t" style="left:906px;top:345.1px;color:#333">/СИНИЙ МЕЛАНЖ/6-9 мес</div>
<div class="t" style="left:1205px;top:345.1px;color:#333"><span style="letter-spacing:0.1px">10013160/061022/3481659</span></div>
<div class="t" style="left:1503px;top:345.1px;color:#333">ТУРЦИЯ</div>
<div class="r" style="right:960px;top:345.1px;color:#333">489,09</div>
<div class="r" style="right:783px;top:345.1px;color:#333">5</div>
<div class="r" style="right:577px;top:345.1px;color:#333">244,55</div>
<div class="r" style="right:295px;top:345.1px;color:#333">2 445,45</div>
<div class="r" style="right:12px;top:345.1px;color:#333">2 690,00</div>
<div class="hl" style="left:0;top:418.9px;width:2950px;background:#E4E4E4"></div>
<div class="t" style="left:12px;top:387.2px;color:#333"><span style="letter-spacing:0.22px">ДВОЙНОЙ КОМПЛЕКТ, 10…</span></div>
<div class="t" style="left:309px;top:387.2px;color:#333;letter-spacing:-0.1px">Спортивный костюм для мальчика</div>
<div class="t" style="left:906px;top:387.2px;color:#333"><span style="letter-spacing:-0.13px">/Тёмно-синий /МАЛЬЧИКИ/…</span></div>
<div class="t" style="left:1205px;top:387.2px;color:#333"><span style="letter-spacing:0.1px">10013160/061022/3481659</span></div>
<div class="t" style="left:1503px;top:387.2px;color:#333">ТУРЦИЯ</div>
<div class="r" style="right:960px;top:387.2px;color:#333">931,82</div>
<div class="r" style="right:783px;top:387.2px;color:#333">2</div>
<div class="r" style="right:577px;top:387.2px;color:#333">186,36</div>
<div class="r" style="right:295px;top:387.2px;color:#333">1 863,64</div>
<div class="r" style="right:12px;top:387.2px;color:#333">2 050,00</div>
<div class="hl" style="left:0;top:460.9px;width:2950px;background:#E4E4E4"></div>
<div class="t" style="left:12px;top:429.2px;color:#333"><span style="letter-spacing:0.22px">ДВОЙНОЙ КОМПЛЕКТ, 10…</span></div>
<div class="t" style="left:309px;top:429.2px;color:#333;letter-spacing:-0.1px">Спортивный костюм для мальчика</div>
<div class="t" style="left:906px;top:429.2px;color:#333"><span style="letter-spacing:-0.13px">/Тёмно-синий /МАЛЬЧИКИ/…</span></div>
<div class="t" style="left:1205px;top:429.2px;color:#333"><span style="letter-spacing:0.1px">10013160/061022/3481659</span></div>
<div class="t" style="left:1503px;top:429.2px;color:#333">ТУРЦИЯ</div>
<div class="r" style="right:960px;top:429.2px;color:#333">931,82</div>
<div class="r" style="right:783px;top:429.2px;color:#333">3</div>
<div class="r" style="right:577px;top:429.2px;color:#333">279,55</div>
<div class="r" style="right:295px;top:429.2px;color:#333">2 795,45</div>
<div class="r" style="right:12px;top:429.2px;color:#333">3 075,00</div>
<div class="hl" style="left:0;top:503.0px;width:2950px;background:#E4E4E4"></div>
<div class="t" style="left:12px;top:471.2px;color:#333"><span style="letter-spacing:0.22px">ДВОЙНОЙ КОМПЛЕКТ, 10…</span></div>
<div class="t" style="left:309px;top:471.2px;color:#333;letter-spacing:-0.1px">Спортивный костюм для мальчика</div>
<div class="t" style="left:906px;top:471.2px;color:#333"><span style="letter-spacing:-0.13px">/Тёмно-синий /МАЛЬЧИКИ/…</span></div>
<div class="t" style="left:1205px;top:471.2px;color:#333"><span style="letter-spacing:0.1px">10013160/061022/3481659</span></div>
<div class="t" style="left:1503px;top:471.2px;color:#333">ТУРЦИЯ</div>
<div class="r" style="right:960px;top:471.2px;color:#333">931,82</div>
<div class="r" style="right:783px;top:471.2px;color:#333">3</div>
<div class="r" style="right:577px;top:471.2px;color:#333">279,55</div>
<div class="r" style="right:295px;top:471.2px;color:#333">2 795,45</div>
<div class="r" style="right:12px;top:471.2px;color:#333">3 075,00</div>
<div class="hl" style="left:0;top:545.0px;width:2950px;background:#E4E4E4"></div>
<div class="t" style="left:12px;top:513.3px;color:#333"><span style="letter-spacing:0.22px">ДВОЙНОЙ КОМПЛЕКТ, 10…</span></div>
<div class="t" style="left:309px;top:513.3px;color:#333;letter-spacing:-0.1px">Спортивный костюм для мальчика</div>
<div class="t" style="left:906px;top:513.3px;color:#333"><span style="letter-spacing:-0.13px">/ОРАНЖЕВЫЙ /МАЛЬЧИК…</span></div>
<div class="t" style="left:1205px;top:513.3px;color:#333"><span style="letter-spacing:0.1px">10013160/061022/3481659</span></div>
<div class="t" style="left:1503px;top:513.3px;color:#333">ТУРЦИЯ</div>
<div class="r" style="right:960px;top:513.3px;color:#333">931,82</div>
<div class="r" style="right:783px;top:513.3px;color:#333">2</div>
<div class="r" style="right:577px;top:513.3px;color:#333">186,36</div>
<div class="r" style="right:295px;top:513.3px;color:#333">1 863,64</div>
<div class="r" style="right:12px;top:513.3px;color:#333">2 050,00</div>
<div class="hl" style="left:0;top:587.0px;width:2950px;background:#E4E4E4"></div>
<div class="t" style="left:12px;top:557.9px;color:#333"><span style="letter-spacing:0.22px">ДВОЙНОЙ КОМПЛЕКТ, 10…</span></div>
<div class="t" style="left:309px;top:557.9px;color:#333;letter-spacing:-0.1px">Спортивный костюм для мальчика</div>
<div class="t" style="left:906px;top:557.9px;color:#333"><span style="letter-spacing:-0.13px">/ОРАНЖЕВЫЙ /МАЛЬЧИК…</span></div>
<div class="t" style="left:1205px;top:557.9px;color:#333"><span style="letter-spacing:0.1px">10013160/061022/3481659</span></div>
<div class="t" style="left:1503px;top:557.9px;color:#333">ТУРЦИЯ</div>
<div class="r" style="right:960px;top:557.9px;color:#333">931,82</div>
<div class="r" style="right:783px;top:557.9px;color:#333">3</div>
<div class="r" style="right:577px;top:557.9px;color:#333">279,55</div>
<div class="r" style="right:295px;top:557.9px;color:#333">2 795,45</div>
<div class="r" style="right:12px;top:557.9px;color:#333">3 075,00</div>
</div>
<div class="a" style="left:76px;top:1599px;width:2950px;height:44px;background:#F2F2F2;border-top:1px solid #C8C8C8"></div>
<div class="a" style="left:372px;top:1600px;width:1px;height:43px;background:#DADADA"></div>
<div class="a" style="left:969px;top:1600px;width:1px;height:43px;background:#DADADA"></div>
<div class="a" style="left:1268px;top:1600px;width:1px;height:43px;background:#DADADA"></div>
<div class="a" style="left:1566px;top:1600px;width:1px;height:43px;background:#DADADA"></div>
<div class="a" style="left:1872px;top:1600px;width:1px;height:43px;background:#DADADA"></div>
<div class="a" style="left:2079px;top:1600px;width:1px;height:43px;background:#DADADA"></div>
<div class="a" style="left:2255px;top:1600px;width:1px;height:43px;background:#DADADA"></div>
<div class="a" style="left:2462px;top:1600px;width:1px;height:43px;background:#DADADA"></div>
<div class="a" style="left:2744px;top:1600px;width:1px;height:43px;background:#DADADA"></div>
<div class="t" style="left:2268px;top:1609px;color:#4A4A4A">92 524,5</div>
<div class="t" style="left:2475.5px;top:1609px;color:#4A4A4A">925 244,5</div>
<div class="t" style="left:2757.7px;top:1609px;color:#4A4A4A">1 017 769</div>
<div class="a" style="left:3026px;top:983px;width:21px;height:660px;background:#fff"></div>
<div class="a" style="left:3031.4px;top:1022px;width:11.4px;height:585px;background:#D4D4D4;border-radius:5px"></div>
<div class="a" style="left:3031.4px;top:1016.6px;width:11.4px;height:18px;background:#8C8C8C;border-radius:5px"></div>
<svg class="a" style="left:0;top:0" width="3097" height="1679" viewBox="0 0 3097 1679"><polygon points="76.2,785.4 79.0,792.8 86.9,793.2 80.8,798.2 82.8,805.8 76.2,801.5 69.6,805.8 71.6,798.2 65.5,793.2 73.4,792.8" fill="none" stroke="#A6A6AC" stroke-width="1.9" stroke-linejoin="miter"/><g transform="translate(2924.4,794.4) rotate(-45) scale(.92)" fill="none" stroke="#555" stroke-width="1.9"><path d="M-2.2 -5.2 H-9 A5.2 5.2 0 0 0 -9 5.2 H-2.2"/><path d="M2.2 -5.2 H9 A5.2 5.2 0 0 1 9 5.2 H2.2"/><path d="M-5.2 0 H5.2"/></g><g fill="#666"><circle cx="2971.4" cy="789.2" r="2.4"/><circle cx="2971.4" cy="795.4" r="2.4"/><circle cx="2971.4" cy="801.6" r="2.4"/></g><rect x="3012.4" y="790.4" width="10.4" height="10.4" fill="none" stroke="#222" stroke-width="2"/><g stroke="#333" stroke-width="1.5"><path d="M3056 787.8L3070.2 802.4M3070.2 787.8L3056 802.4"/></g><path d="M260 939.4 L268.2 947.8 H263.4 V957.4 H256.6 V947.8 H251.8 Z" fill="#3FA0E4" stroke="#2477B8" stroke-width="1" stroke-linejoin="round"/><path d="M305 957.4 L313.2 949.0 H308.4 V939.4 H301.6 V949.0 H296.8 Z" fill="#3FA0E4" stroke="#2477B8" stroke-width="1" stroke-linejoin="round"/><path d="M3034.2 1001.6 L3040.4 1001.6 L3037.3 996 Z" fill="#C8C8C8"/><path d="M3034 1621.8 L3040.6 1621.8 L3037.3 1627.4 Z" fill="#555"/></svg>
<svg class="a" style="left:0;top:0" width="3097" height="1679" viewBox="0 0 3097 1679"><defs><filter id="sh" x="-5%" y="-5%" width="110%" height="115%"><feDropShadow dx="3.5" dy="4" stdDeviation="2.6" flood-color="#000" flood-opacity=".38"/></filter></defs><g filter="url(#sh)"><rect x="1143.7" y="533.6" width="172" height="66.4" fill="none" stroke="#0505D2" stroke-width="3"/><line x1="1231" y1="593" x2="697" y2="786.8" stroke="#E1141E" stroke-width="2"/><path d="M683.9 791.5 L696.4 779.3 L701 791.8 Z" fill="#F01018"/></g></svg>
</body></html>
